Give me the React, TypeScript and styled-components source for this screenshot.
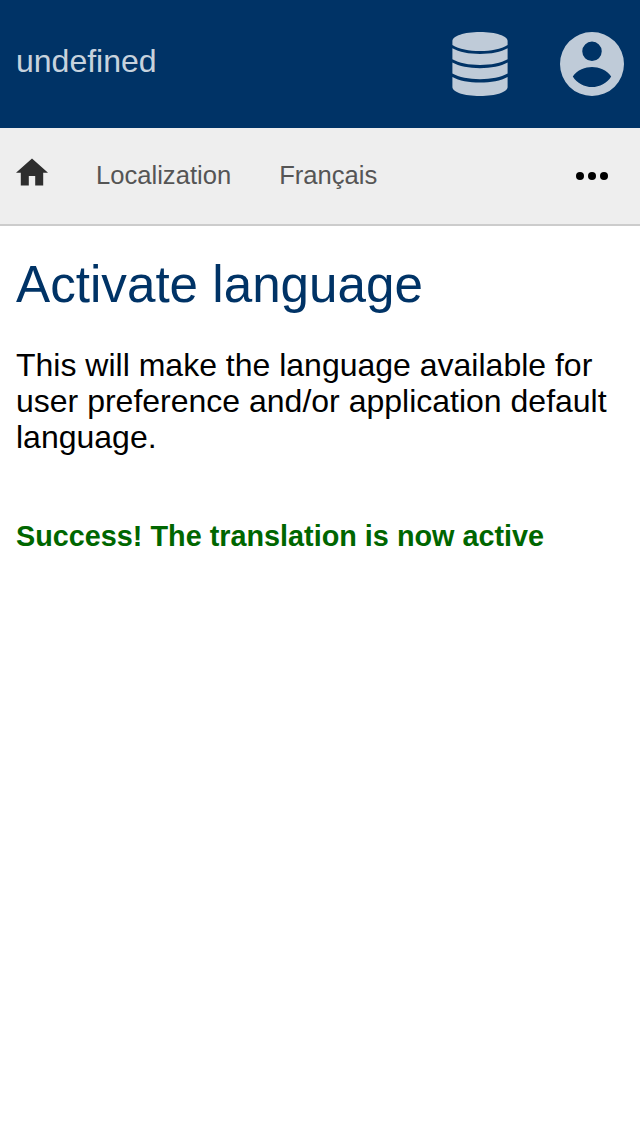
import React from "react";
import styled, { createGlobalStyle } from "styled-components";

const GlobalStyle = createGlobalStyle`
  * { box-sizing: border-box; }
  body {
    margin: 0;
    background: #fff;
    color: #000;
    font-family: "Liberation Sans", Arial, sans-serif;
  }
`;

const Header = styled.header`
  display: flex;
  align-items: center;
  height: 128px;
  padding: 0 16px;
  background: #003366;
  color: rgba(255, 255, 255, 0.75);
`;

const Title = styled.div`
  flex: 1;
  padding-bottom: 6px;
  color: rgba(255, 255, 255, 0.8);
  font-size: 32px;
  line-height: 36px;
`;

const HeaderIcons = styled.div`
  display: flex;
  gap: 52px;
`;

const Icon = styled.svg<{ $w: number; $h: number }>`
  display: block;
  width: ${(p) => p.$w}px;
  height: ${(p) => p.$h}px;
  fill: currentColor;
`;

const Nav = styled.nav`
  display: flex;
  align-items: center;
  height: 98px;
  padding: 0 32px 0 16px;
  background: #eee;
  border-bottom: 2px solid #ccc;
`;

const HomeLink = styled.a`
  margin: 0 48px 8px 0;
  color: #2e2e2e;
`;

const Crumb = styled.a`
  margin: 0 48px 2px 0;
  color: #555;
  font-size: 25.6px;
  line-height: 30px;
`;

const More = styled.button`
  margin: 0 0 0 auto;
  padding: 0;
  border: 0;
  background: none;
  color: #000;
`;

const Main = styled.main`
  padding: 30px 16px;
`;

const Heading = styled.h1`
  margin: 0;
  color: #003366;
  font-size: 51.2px;
  font-weight: 400;
  line-height: 57px;
`;

const Text = styled.p`
  margin: 34px 0 0;
  font-size: 32px;
  line-height: 36px;
`;

const Success = styled.p`
  margin: 65px 0 0;
  color: #006600;
  font-size: 28.8px;
  font-weight: 700;
  line-height: 33px;
`;

export default function App() {
  return (
    <>
      <GlobalStyle />
      <Header>
        <Title>undefined</Title>
        <HeaderIcons>
          <Icon $w={56} $h={64} viewBox="0 0 56 64">
            <path d="M.4 9C.4 4 12 0 28 0s27.600 4 27.600 9v4C49 17 39 19 28 19S7 17 .4 13z" />
            <path d="M.4 16.300C7 20 17 22 28 22s21-2 27.600-5.700v11C49 31 39 33 28 33S7 31 .4 27.300z" />
            <path d="M.4 30.600C7 34.300 17 36.300 28 36.300s21-2 27.600-5.700v11C49 45.300 39 47.300 28 47.300S7 45.300 .4 41.600z" />
            <path d="M.4 44.900C7 48.600 17 50.600 28 50.600s21-2 27.600-5.700V55c0 5-11.600 9-27.600 9S.4 60 .4 55z" />
          </Icon>
          <Icon $w={64} $h={64} viewBox="0 0 20 20">
            <path d="M10 0a10 10 0 1 0 0 20 10 10 0 0 0 0-20zm0 3a3.050 3.050 0 1 1 0 6.100 3.050 3.050 0 0 1 0-6.100zm0 14.200C7.600 17.200 5.300 16 4 13.900 5.300 11.800 8 10.900 10 10.900s4.700.9 6 3C14.700 16 12.400 17.200 10 17.200z" />
          </Icon>
        </HeaderIcons>
      </Header>
      <Nav>
        <HomeLink>
          <Icon $w={32} $h={28} viewBox="2 2.75 20 17.5">
            <path d="M10 20v-6h4v6h5v-8h3L12 3 2 12h3v8z" />
          </Icon>
        </HomeLink>
        <Crumb>Localization</Crumb>
        <Crumb>Français</Crumb>
        <More aria-label="More">
          <Icon $w={32} $h={8} viewBox="0 0 32 8">
            <circle cx="4" cy="4" r="4" />
            <circle cx="16" cy="4" r="4" />
            <circle cx="28" cy="4" r="4" />
          </Icon>
        </More>
      </Nav>
      <Main>
        <Heading>Activate language</Heading>
        <Text>
          This will make the language available for user preference and/or
          application default language.
        </Text>
        <Success>Success! The translation is now active</Success>
      </Main>
    </>
  );
}
